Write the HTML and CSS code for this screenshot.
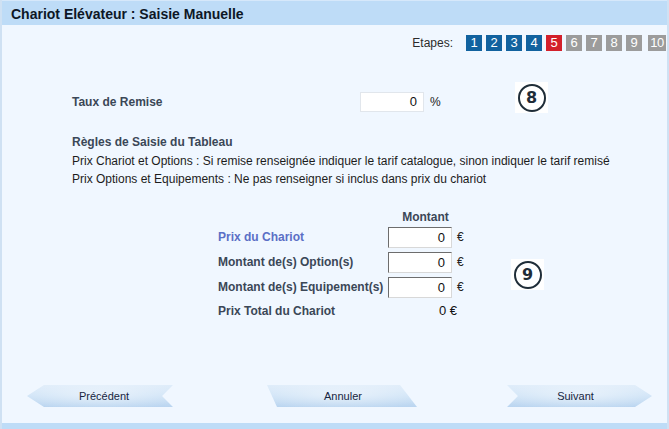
FILE: index.html
```html
<!DOCTYPE html>
<html lang="fr">
<head>
<meta charset="utf-8">
<title>Chariot Elévateur : Saisie Manuelle</title>
<link rel="stylesheet" href="styles.css">
</head>
<body>
<div class="window">
  <div class="titlebar">Chariot Elévateur : Saisie Manuelle</div>

  <div class="steps">
    <span class="steps-label">Etapes:</span>
    <span class="step done">1</span>
    <span class="step done">2</span>
    <span class="step done">3</span>
    <span class="step done">4</span>
    <span class="step current">5</span>
    <span class="step todo">6</span>
    <span class="step todo">7</span>
    <span class="step todo">8</span>
    <span class="step todo">9</span>
    <span class="step todo wide">10</span>
  </div>

  <div class="remise">
    <span class="remise-label">Taux de Remise</span>
    <span class="field"><span class="input">0</span><span class="unit">%</span></span>
  </div>

  <div class="rules">
    <div class="rules-title">Règles de Saisie du Tableau</div>
    <div>Prix Chariot et Options : Si remise renseignée indiquer le tarif catalogue, sinon indiquer le tarif remisé</div>
    <div>Prix Options et Equipements : Ne pas renseigner si inclus dans prix du chariot</div>
  </div>

  <div class="table">
    <span></span>
    <span class="col-head">Montant</span>

    <span class="label blue">Prix du Chariot</span>
    <span class="cell"><span class="input inset">0</span><span class="unit">€</span></span>

    <span class="label">Montant de(s) Option(s)</span>
    <span class="cell"><span class="input inset">0</span><span class="unit">€</span></span>

    <span class="label">Montant de(s) Equipement(s)</span>
    <span class="cell"><span class="input inset">0</span><span class="unit">€</span></span>

    <span class="label total">Prix Total du Chariot</span>
    <span class="cell total-val">0 €</span>
  </div>

  <div class="buttons">
    <div class="btn prev">Précédent</div>
    <div class="btn cancel">Annuler</div>
    <div class="btn next">Suivant</div>
  </div>

  <div class="bottomband"></div>

  <div class="marker m8"><span class="ring">8</span></div>
  <div class="marker m9"><span class="ring">9</span></div>
</div>
</body>
</html>
```

FILE: styles.css
```css
html, body {
  margin: 0;
  padding: 0;
}
body {
  width: 669px;
  height: 429px;
  overflow: hidden;
  font-family: "Liberation Sans", Arial, sans-serif;
  font-size: 12px;
  color: #1a1a1a;
  background: #eff6fe;
}
.window {
  position: relative;
  box-sizing: border-box;
  width: 669px;
  height: 429px;
  display: flex;
  flex-direction: column;
  border-left: 2px solid #cfe1f3;
  border-right: 2px solid #cfe1f3;
  background: #f0f7ff;
}
.titlebar {
  height: 25px;
  line-height: 27px;
  padding-left: 9px;
  background: #bedcf7;
  border-top: 1px solid #d6e8fa;
  box-sizing: border-box;
  font-size: 14px;
  font-weight: bold;
  color: #0d1726;
}
.steps {
  display: flex;
  justify-content: flex-end;
  align-items: center;
  gap: 4px;
  margin-top: 10px;
  padding-right: 1px;
  height: 16px;
}
.steps-label {
  color: #2b2b2b;
  margin-right: 9px;
}
.step {
  width: 16px;
  height: 16px;
  line-height: 16px;
  text-align: center;
  color: #fff;
  font-size: 13px;
}
.step.wide {
  width: 18px;
  margin-left: 2px;
  letter-spacing: -0.5px;
}
.done { background: #11629f; }
.current { background: #d3202b; }
.todo { background: #9c9c9c; }

.remise {
  display: flex;
  align-items: center;
  margin-top: 41px;
  padding-left: 70px;
  height: 20px;
}
.remise-label {
  width: 288px;
  font-weight: bold;
  color: #3b4757;
}
.field {
  display: flex;
  align-items: center;
}
.input {
  box-sizing: border-box;
  width: 64px;
  height: 20px;
  line-height: 18px;
  padding-right: 6px;
  text-align: right;
  background: #fff;
  border: 1px solid #e1e6ec;
  font-size: 13px;
  color: #111;
}
.unit {
  margin-left: 6px;
  color: #222;
}

.rules {
  margin-top: 21px;
  padding-left: 70px;
  line-height: 18.5px;
  color: #1c1c1c;
}
.rules-title {
  font-weight: bold;
  color: #3b4757;
}

.table {
  display: grid;
  grid-template-columns: 170px 78px;
  grid-template-rows: auto 21px 21px 21px 18px;
  row-gap: 4px;
  margin-top: 19px;
  padding-left: 216px;
  align-items: center;
}
.col-head {
  font-weight: bold;
  color: #3b4757;
  text-align: center;
  line-height: 18px;
  margin-bottom: -3px;
  padding-right: 3px;
}
.label {
  font-weight: bold;
  color: #3b4757;
  white-space: nowrap;
}
.label.blue {
  color: #5b6fc6;
}
.cell {
  display: flex;
  align-items: center;
}
.input.inset {
  height: 21px;
  width: 64px;
  line-height: 19px;
  border-top: 1px solid #6d6d6d;
  border-left: 1px solid #6d6d6d;
  border-right: 1px solid #d8d8d8;
  border-bottom: 1px solid #d8d8d8;
}
.cell .unit {
  margin-left: 5px;
}
.total-val {
  justify-content: flex-end;
  padding-right: 9px;
  font-size: 13px;
  color: #111;
}

.buttons {
  display: flex;
  align-items: center;
  margin-top: auto;
  margin-bottom: 16px;
  padding-left: 25px;
  height: 22px;
}
.btn {
  height: 22px;
  line-height: 22px;
  text-align: center;
  font-size: 11px;
  color: #17253f;
  background:
    radial-gradient(ellipse 60% 70% at 50% 45%, rgba(255,255,255,0.5), rgba(255,255,255,0) 100%),
    linear-gradient(to bottom, #e0edfa 0%, #d0e4f7 45%, #bad5f0 100%);
}
.prev {
  width: 146px;
  clip-path: polygon(0 50%, 17px 0, 100% 0, calc(100% - 11px) 50%, 100% 100%, 17px 100%);
  padding-left: 8px;
  box-sizing: border-box;
}
.cancel {
  width: 150px;
  margin-left: 94px;
  clip-path: polygon(0 0, 133px 0, 100% 100%, 10px 100%);
  padding-left: 2px;
  box-sizing: border-box;
}
.next {
  width: 145px;
  margin-left: 90px;
  clip-path: polygon(0 0, calc(100% - 17px) 0, 100% 50%, calc(100% - 17px) 100%, 0 100%, 11px 50%);
  padding-right: 8px;
  box-sizing: border-box;
}
.bottomband {
  height: 6px;
  background: #bedcf7;
}

.marker {
  position: absolute;
  width: 33px;
  height: 31px;
  background: #fff;
  display: flex;
  align-items: center;
  justify-content: center;
}
.m8 {
  left: 513px;
  top: 82px;
}
.m9 {
  left: 509px;
  top: 259px;
}
.ring {
  box-sizing: border-box;
  width: 28px;
  height: 28px;
  border: 2px solid #1f2d38;
  border-radius: 50%;
  display: flex;
  align-items: center;
  justify-content: center;
  font-family: "DejaVu Sans", "Liberation Sans", sans-serif;
  font-size: 16px;
  font-weight: bold;
  color: #1f2d38;
}
```
